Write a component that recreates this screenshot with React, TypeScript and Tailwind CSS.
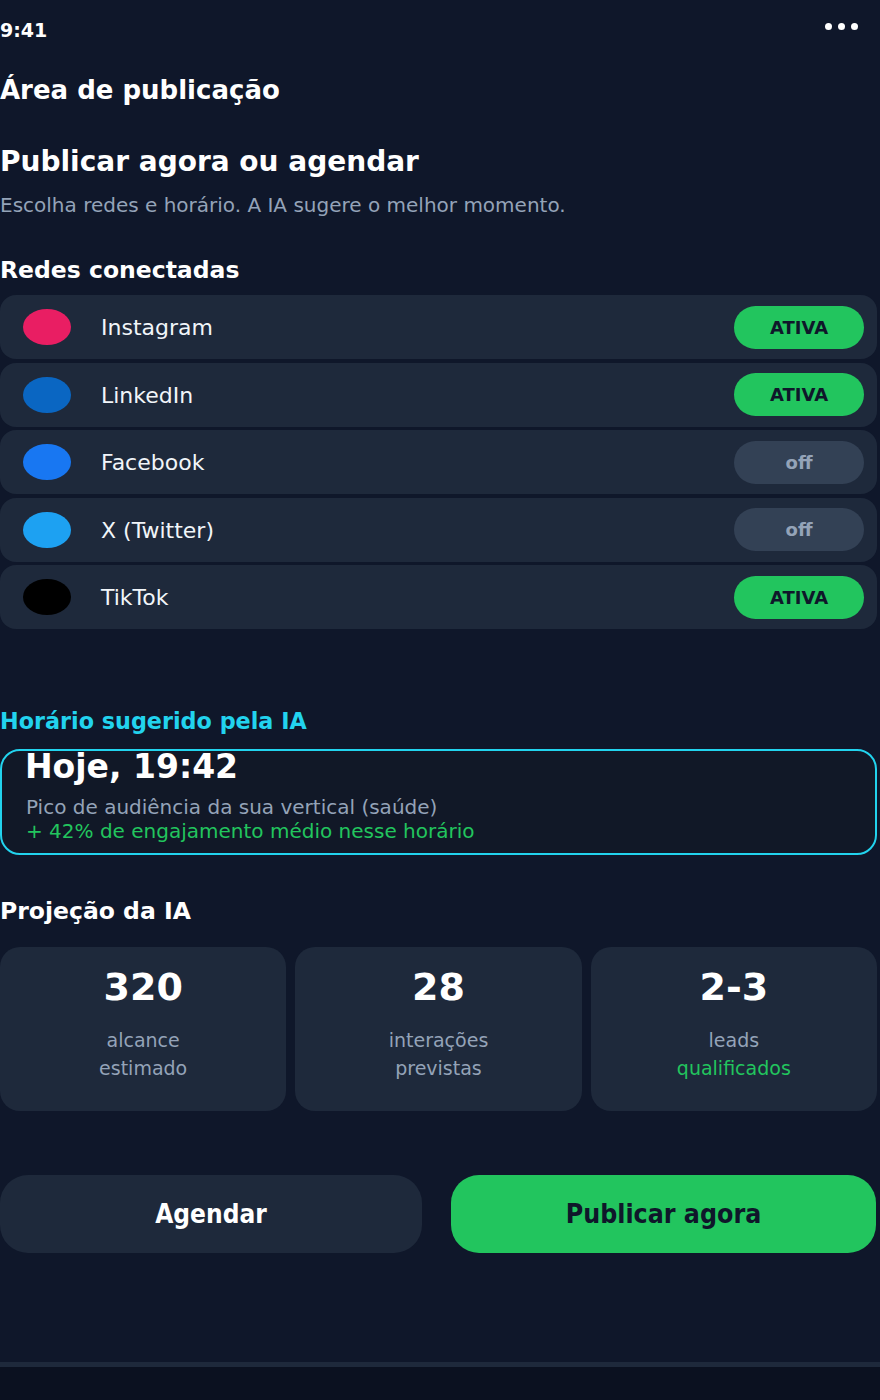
import React from 'react';

type Rede = { nome: string; cor: string; ativa: boolean };

const redes: Rede[] = [
  { nome: 'Instagram', cor: 'bg-[#e91e63]', ativa: true },
  { nome: 'LinkedIn', cor: 'bg-[#0a66c2]', ativa: true },
  { nome: 'Facebook', cor: 'bg-[#1877f2]', ativa: false },
  { nome: 'X (Twitter)', cor: 'bg-[#1da1f2]', ativa: false },
  { nome: 'TikTok', cor: 'bg-black', ativa: true },
];

const projecoes = [
  { valor: '320', l1: 'alcance', l2: 'estimado', destaque: false },
  { valor: '28', l1: 'interações', l2: 'previstas', destaque: false },
  { valor: '2-3', l1: 'leads', l2: 'qualificados', destaque: true },
];

const App: React.FC = () => {
  return (
    <div className="h-[1400px] bg-[#0f172a] flex flex-col text-white font-['DejaVu_Sans',sans-serif]">
      <div className="w-[877px]">
        {/* Status bar */}
        <div className="h-[60px] flex items-center justify-between pr-[19px]">
          <span className="text-[19px] font-bold leading-none">9:41</span>
          <div className="flex gap-[6px] -mt-[7px]">
            <span className="w-[7px] h-[7px] rounded-full bg-white" />
            <span className="w-[7px] h-[7px] rounded-full bg-white" />
            <span className="w-[7px] h-[7px] rounded-full bg-white" />
          </div>
        </div>

        <h1 className="mt-[14px] text-[26px] leading-[32px] font-bold">Área de publicação</h1>

        <h2 className="mt-[38px] text-[28px] leading-[36px] font-bold">Publicar agora ou agendar</h2>
        <p className="mt-[12px] text-[20px] leading-[26px] text-[#94a3b8]">
          Escolha redes e horário. A IA sugere o melhor momento.
        </p>

        <h3 className="mt-[37px] text-[23.5px] leading-[30px] font-bold">Redes conectadas</h3>

        {/* Redes */}
        <div className="mt-[10px] flex flex-col gap-[3.5px]">
          {redes.map((r) => (
            <div
              key={r.nome}
              className="h-[64px] rounded-[16px] bg-[#1e293b] flex items-center pl-[23px] pr-[13px]"
            >
              <span className={`w-[48px] h-[36px] rounded-[50%] ${r.cor}`} />
              <span className="ml-[30px] text-[22px] leading-none text-[#f1f5f9] mt-[2px]">{r.nome}</span>
              <span
                className={
                  r.ativa
                    ? 'ml-auto w-[130px] h-[43px] rounded-full bg-[#22c55e] text-[#0f172a] flex items-center justify-center text-[18px] font-bold'
                    : 'ml-auto w-[130px] h-[43px] rounded-full bg-[#334155] text-[#94a3b8] flex items-center justify-center text-[18px] font-bold'
                }
              >
                {r.ativa ? 'ATIVA' : 'off'}
              </span>
            </div>
          ))}
        </div>

        {/* Horário IA */}
        <h3 className="mt-[78px] text-[22.3px] leading-[28px] font-bold text-[#22d3ee]">Horário sugerido pela IA</h3>
        <div className="mt-[14px] h-[106px] rounded-[20px] border-2 border-[#22d3ee] bg-[#111827] pl-[24px]">
          <div className="text-[33px] leading-[32px] font-bold -ml-[1px]">Hoje, 19:42</div>
          <p className="mt-[12px] text-[20px] leading-[24px] text-[#94a3b8]">
            Pico de audiência da sua vertical (saúde)
          </p>
          <p className="text-[20px] leading-[24px] text-[#22c55e]">
            + 42% de engajamento médio nesse horário
          </p>
        </div>

        {/* Projeção */}
        <h3 className="mt-[41px] text-[23.5px] leading-[30px] font-bold">Projeção da IA</h3>
        <div className="mt-[21px] grid grid-cols-3 gap-[9px]">
          {projecoes.map((p) => (
            <div key={p.valor} className="h-[164px] rounded-[20px] bg-[#1e293b] flex flex-col items-center pt-[20px]">
              <div className="text-[38px] leading-[40px] font-bold">{p.valor}</div>
              <div className="mt-[19px] text-[19px] leading-[28px] text-[#94a3b8]">{p.l1}</div>
              <div className={`text-[19px] leading-[28px] ${p.destaque ? 'text-[#22c55e]' : 'text-[#94a3b8]'}`}>
                {p.l2}
              </div>
            </div>
          ))}
        </div>

        {/* Botões */}
        <div className="mt-[64px] flex gap-[29px] pr-[1px]">
          <button className="w-[422px] h-[78px] rounded-[28px] bg-[#1e293b] text-white text-[26px] font-bold font-['DejaVu_Sans_Condensed','DejaVu_Sans',sans-serif]">
            Agendar
          </button>
          <button className="flex-1 h-[78px] rounded-[28px] bg-[#22c55e] text-[#0f172a] text-[26.5px] font-bold font-['DejaVu_Sans_Condensed','DejaVu_Sans',sans-serif]">
            Publicar agora
          </button>
        </div>
      </div>

      {/* Barra inferior */}
      <div className="mt-auto h-[38px] border-t-[5px] border-[#1e293b] bg-[#0b1120]" />
    </div>
  );
};

export default App;
